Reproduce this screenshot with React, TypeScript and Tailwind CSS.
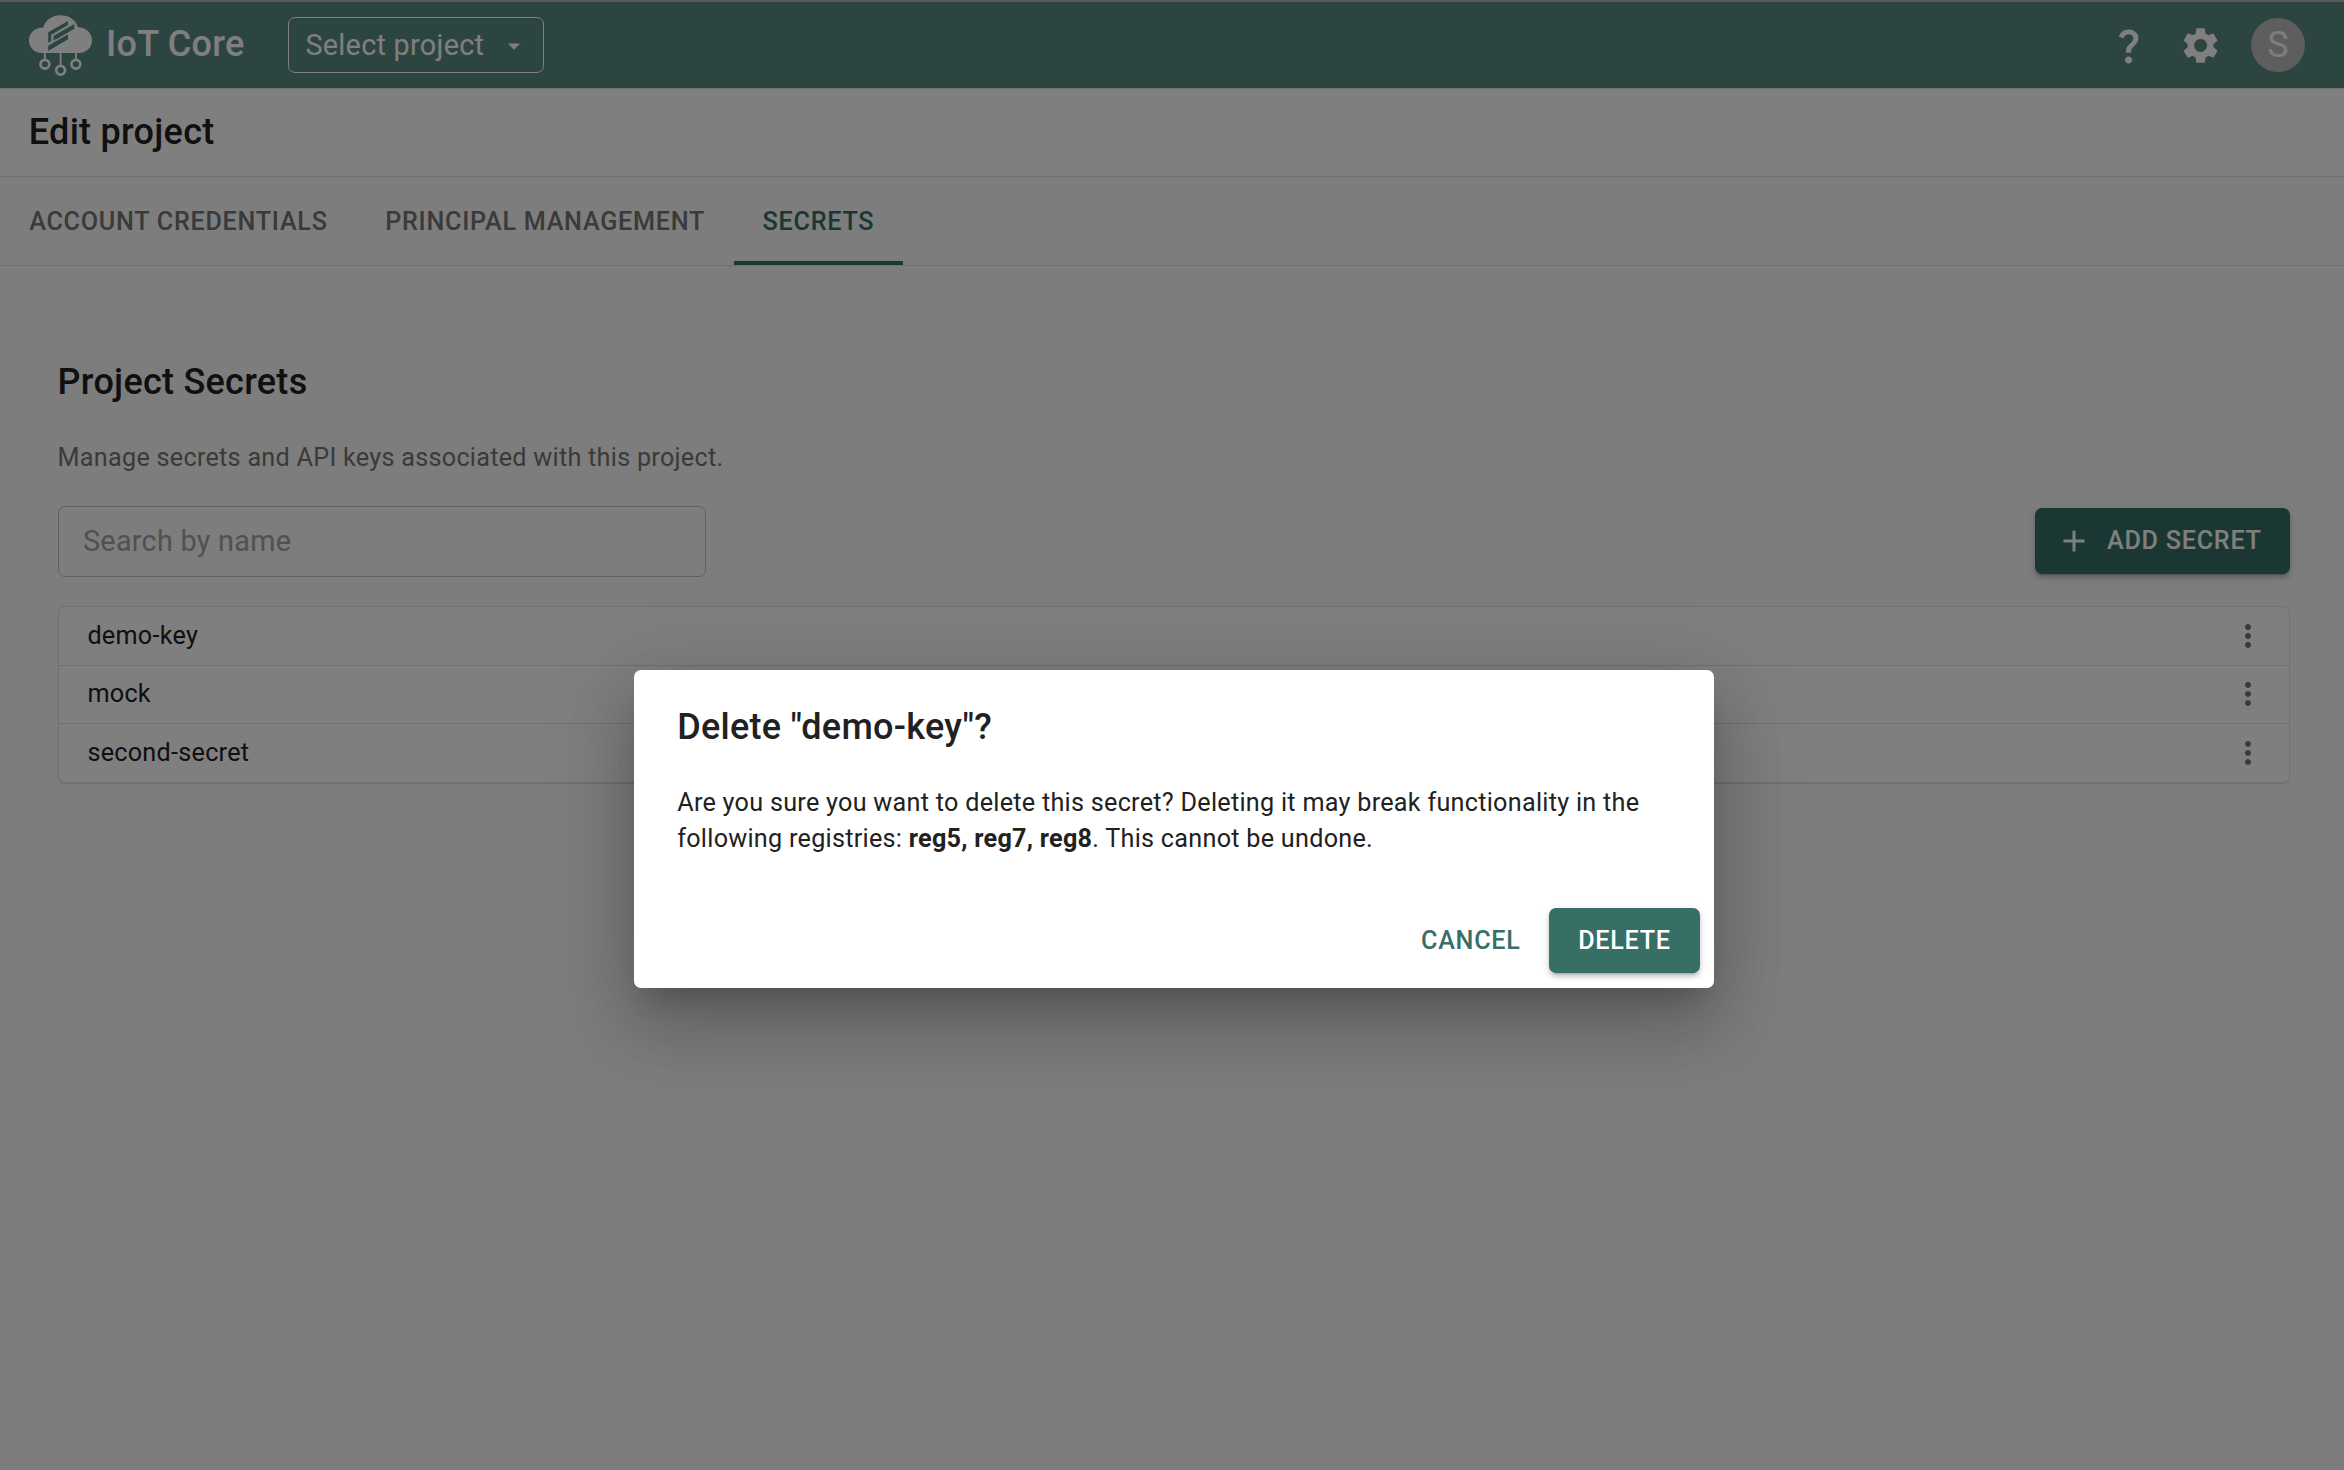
import React from "react";
import {
  MdAdd,
  MdArrowDropDown,
  MdMoreVert,
  MdQuestionMark,
  MdSettings,
} from "react-icons/md";

const tabs = ["Account Credentials", "Principal Management", "Secrets"];

const secrets = [
  { name: "demo-key", row: "h-[59px]" },
  { name: "mock", row: "h-[58px] pb-px" },
  { name: "second-secret", row: "h-[58px]" },
];

function Logo() {
  return (
    <svg width="64" height="62" viewBox="0 0 64 62" className="mt-[13px] shrink-0">
      <g fill="#fff">
        <path d="M13 38C5.500 38 0 32.500 0 25.500C0 18 5.700 12.500 14.300 12.500C16.500 5 23.200 0.300 31.500 0.300C39.800 0.300 47 5 49 12.300C57 12.500 63 18 63 25.300C63 32.500 57.500 38 50 38Z" />
        <path d="M14.900 37H16.700V46H14.900ZM30.700 37H32.500V52H30.700ZM46 37H47.800V46H46Z" />
      </g>
      <g fill="none" stroke="#fff" strokeWidth="2.700">
        <circle cx="15.900" cy="49.300" r="4.400" />
        <circle cx="31.600" cy="55.200" r="4.400" />
        <circle cx="46.900" cy="49.300" r="4.400" />
      </g>
      <g fill="#588a83">
        <path d="M19.200 27.700V17.200L39 6V10L22.200 19.700V26Z" />
        <path d="M24.500 25.300V21L45.300 9V13.800L28.500 23.500Z" />
        <path d="M19.200 35.900V30.700L39 19.300V24.300Z" />
      </g>
    </svg>
  );
}

function TopBar() {
  return (
    <header className="flex h-[89px] items-start border-t-2 border-b border-t-[#b4afb5] border-b-[#e0e0e0] bg-[#588a83] pl-[29px] pr-[39px] text-white">
      <Logo />
      <span className="ml-[13px] mt-[15px] text-[36px] leading-[54px] font-medium tracking-[0.0075em]">
        IoT Core
      </span>
      <button className="ml-[44px] mt-[15px] flex h-[56px] w-[256px] items-center rounded-[7px] border border-white pt-px pl-[16px] text-[28.8px] tracking-[0.00938em]">
        Select project
        <MdArrowDropDown className="ml-[15px] size-[30px]" />
      </button>
      <div className="ml-auto mt-[16px] flex h-[54px] items-center">
        <MdQuestionMark className="mt-px size-[43.2px]" />
        <MdSettings className="mt-px ml-[29px] size-[43.2px]" />
        <div className="ml-[29px] flex size-[54px] items-center justify-center rounded-full bg-[#bdbdbd] text-[36px] leading-none text-[#fafafa]">
          S
        </div>
      </div>
    </header>
  );
}

function SecretsTable() {
  return (
    <div className="mt-[29px] rounded-[7px] border border-b-2 border-[#e0e0e0] bg-white">
      {secrets.map((secret) => (
        <div
          key={secret.name}
          className={`${secret.row} flex items-center justify-between border-b border-[#e0e0e0] pl-[28.8px] pr-[23px] last:border-b-0`}
        >
          <span className="text-[25.2px] leading-[36px] tracking-[0.01071em] text-[#212121]">
            {secret.name}
          </span>
          <MdMoreVert className="size-[36px] text-[#757575]" />
        </div>
      ))}
    </div>
  );
}

function DeleteDialog() {
  return (
    <div className="absolute inset-0 bg-black/50">
      <div
        role="dialog"
        className="absolute left-[634px] top-[670px] flex h-[318px] w-[1080px] flex-col rounded-[7px] bg-white text-[#212121] shadow-[0_20px_27px_-13px_rgba(0,0,0,0.2),0_43px_68px_5px_rgba(0,0,0,0.14),0_16px_83px_14px_rgba(0,0,0,0.12)]"
      >
        <h2 className="px-[43.2px] pt-[28px] text-[36px] leading-[58px] font-medium tracking-[0.0075em]">
          Delete "demo-key"?
        </h2>
        <p className="mt-[29px] px-[43.2px] text-[25.2px] leading-[36px] tracking-[0.01071em]">
          Are you sure you want to delete this secret? Deleting it may break functionality in the
          following registries: <b>reg5, reg7, reg8</b>. This cannot be undone.
        </p>
        <div className="mt-auto flex justify-end gap-[14px] pr-[14px] pb-[15px] text-[25.2px] leading-[44px] font-medium tracking-[0.02857em]">
          <button className="h-[65px] px-[14.4px] text-[#376f67] uppercase">Cancel</button>
          <button className="h-[65px] w-[151px] rounded-[7px] bg-[#376f67] text-white uppercase shadow-[0_5px_2px_-4px_rgba(0,0,0,0.2),0_4px_4px_0_rgba(0,0,0,0.14),0_2px_9px_0_rgba(0,0,0,0.12)]">
            Delete
          </button>
        </div>
      </div>
    </div>
  );
}

export default function App() {
  return (
    <div className="relative h-[1470px] w-[2344px] overflow-hidden bg-[#fafafa] font-['Roboto',sans-serif] text-[#212121]">
      <TopBar />

      <div className="flex h-[88px] items-center border-b border-[#e0e0e0] bg-white pb-[2px] pl-[28.8px]">
        <h1 className="text-[36px] leading-[58px] font-medium tracking-[0.0075em]">Edit project</h1>
      </div>

      <nav className="flex h-[89px] border-b border-[#e0e0e0] pl-[0.4px]">
        {tabs.map((tab) => (
          <button
            key={tab}
            className={`border-b-4 px-[28.8px] pt-[6px] text-[25.2px] font-medium tracking-[0.02857em] uppercase ${
              tab === "Secrets" ? "border-[#376f67] text-[#376f67]" : "border-transparent text-[#757575]"
            }`}
          >
            {tab}
          </button>
        ))}
      </nav>

      <main className="pt-[87px] pr-[54px] pl-[57.6px]">
        <h2 className="text-[36px] leading-[58px] font-medium tracking-[0.0075em]">Project Secrets</h2>
        <p className="mt-[29px] text-[25.2px] leading-[36px] tracking-[0.01071em] text-[#757575]">
          Manage secrets and API keys associated with this project.
        </p>
        <div className="mt-[30px] flex items-start justify-between">
          <input
            placeholder="Search by name"
            className="h-[71px] w-[648px] rounded-[7px] border border-[#c1c1c1] bg-transparent px-[24.4px] pb-px text-[28.8px] tracking-[0.00938em] placeholder:text-[#a2a2a2]"
          />
          <button className="mt-[2px] flex h-[66px] w-[255px] items-center rounded-[7px] bg-[#376f67] pl-[21px] text-[25.2px] font-medium tracking-[0.02857em] text-white uppercase shadow-[0_5px_2px_-4px_rgba(0,0,0,0.2),0_4px_4px_0_rgba(0,0,0,0.14),0_2px_9px_0_rgba(0,0,0,0.12)]">
            <MdAdd className="mr-[15px] size-[36px]" />
            Add Secret
          </button>
        </div>
        <SecretsTable />
      </main>

      <DeleteDialog />
    </div>
  );
}
